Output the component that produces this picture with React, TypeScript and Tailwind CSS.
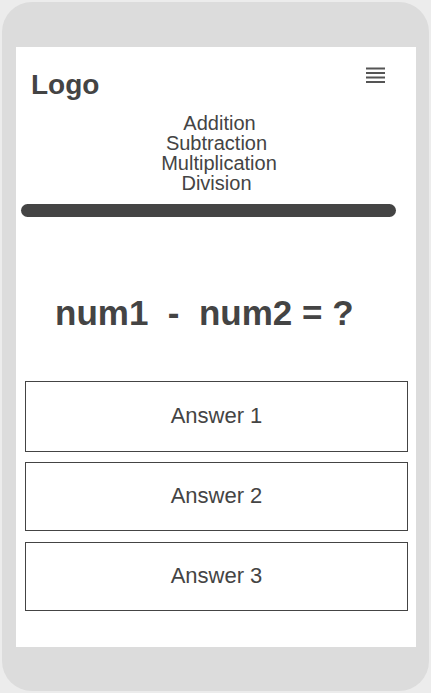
import React from "react";

function Hamburger() {
  return (
    <svg width="19" height="16" viewBox="0 0 19 16" className="block">
      <rect x="0" y="0.5" width="19" height="2" fill="#555" />
      <rect x="0" y="5" width="19" height="2" fill="#555" />
      <rect x="0" y="9.5" width="19" height="2" fill="#555" />
      <rect x="0" y="14" width="19" height="2" fill="#555" />
    </svg>
  );
}

export default function App() {
  const font = { fontFamily: '"Liberation Sans", Arial, sans-serif' };
  return (
    <div className="w-[431px] h-[693px] bg-[#ececec] pl-[2px] pt-[2px]" style={font}>
      <div className="w-[427px] h-[689px] rounded-[30px] bg-[#dcdcdc] pl-[14px] pt-[45px]">
        <div className="w-[400px] h-[600px] bg-white flex flex-col text-[#444444]">
          <div className="flex justify-between items-start pt-[22px] pl-[15px] pr-[31px]">
            <div className="text-[28px] leading-[32px] font-bold">Logo</div>
            <div className="mt-[-2px]">
              <Hamburger />
            </div>
          </div>
          <div className="mt-[12px] flex flex-col items-center text-[20px] leading-[20px]">
            <div className="pl-[7px]">Addition</div>
            <div className="pl-[1px]">Subtraction</div>
            <div className="pl-[6px]">Multiplication</div>
            <div className="pl-[1px]">Division</div>
          </div>
          <div className="mt-[11px] ml-[5px] w-[375px] h-[13px] rounded-full bg-[#444444]" />
          <div className="mt-[76px] pl-[39px] text-[35px] leading-[40px] font-bold whitespace-pre">
            {"num1  -  num2 = ?"}
          </div>
          <div className="mt-[48px] ml-[9px] w-[383px] flex flex-col">
            <div className="h-[71px] border border-[#444444] flex items-center justify-center text-[22px] leading-[26px] pb-[2px]">
              Answer 1
            </div>
            <div className="mt-[10px] h-[69px] border border-[#444444] flex items-center justify-center text-[22px] leading-[26px] pb-[2px]">
              Answer 2
            </div>
            <div className="mt-[11px] h-[69px] border border-[#444444] flex items-center justify-center text-[22px] leading-[26px] pb-[2px]">
              Answer 3
            </div>
          </div>
        </div>
      </div>
    </div>
  );
}
